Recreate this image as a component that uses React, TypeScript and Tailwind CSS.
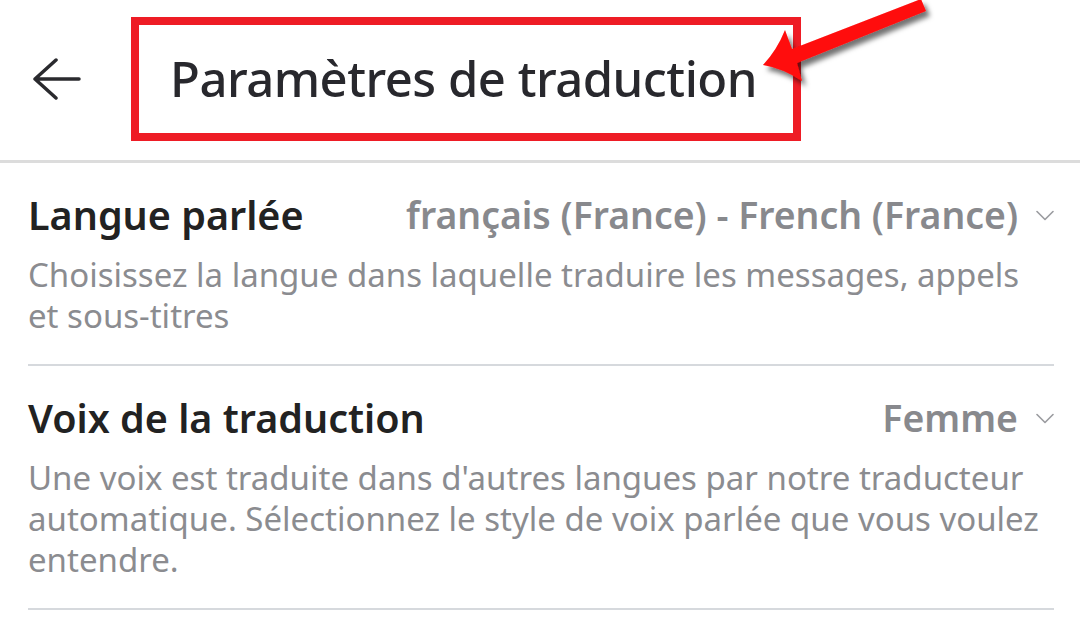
import React from "react"

const font = { fontFamily: '"Noto Sans", "Open Sans", sans-serif' }

function Chevron() {
  return (
    <svg width="18" height="11" viewBox="0 0 18 11" className="shrink-0 ml-[18px]">
      <path d="M1 1.5 9 9.5 17 1.5" fill="none" stroke="#9a9b9f" strokeWidth="1.6" strokeLinecap="round" strokeLinejoin="round" />
    </svg>
  )
}

function SettingRow({ label, value, lines }: { label: string; value: string; lines: string[] }) {
  return (
    <div className="border-b-2 border-[#d6d9dd] pt-[28px] pb-[28px]">
      <div className="flex items-center h-[48px]">
        <span className="text-[39.5px] leading-[48px] font-semibold text-[#222222] whitespace-nowrap">{label}</span>
        <div className="ml-auto flex items-center">
          <span className="text-[37.4px] leading-[48px] font-semibold text-[#88898d] whitespace-nowrap">{value}</span>
          <Chevron />
        </div>
      </div>
      <p className="mt-[15px] text-[33px] leading-[41px] text-[#8b8c90]">
        {lines.map((l) => (
          <span key={l} className="block whitespace-nowrap">{l}</span>
        ))}
      </p>
    </div>
  )
}

export default function App() {
  return (
    <div className="relative w-[1080px] h-[636px] bg-white overflow-hidden" style={font}>
      {/* Header */}
      <div className="flex items-center h-[163px] border-b-[3px] border-[#dcdcdc] pl-[33px]">
        <svg width="48" height="42" viewBox="0 0 48 42" className="shrink-0 -mt-[2px]">
          <path d="M46 21H2M23 2 2 21l21 19" fill="none" stroke="#2a2a2e" strokeWidth="3.5" strokeLinecap="round" strokeLinejoin="round" />
        </svg>
        <div className="ml-[50px] -mt-[3px] w-[670px] h-[124px] border-[8px] border-[#ee1c25] flex items-center pl-[31px]">
          <h1 className="text-[49px] leading-none font-medium tracking-[-0.5px] text-[#28282d] whitespace-nowrap">Paramètres de traduction</h1>
        </div>
      </div>

      <div className="pl-[28px] pr-[26px]">
        <SettingRow
          label="Langue parlée"
          value="français (France) - French (France)"
          lines={["Choisissez la langue dans laquelle traduire les messages, appels", "et sous-titres"]}
        />
        <SettingRow
          label="Voix de la traduction"
          value="Femme"
          lines={[
            "Une voix est traduite dans d'autres langues par notre traducteur",
            "automatique. Sélectionnez le style de voix parlée que vous voulez",
            "entendre.",
          ]}
        />
      </div>

      {/* annotation arrow */}
      <svg width="200" height="100" viewBox="0 0 200 100" className="absolute left-[750px] top-0">
        <defs>
          <filter id="sh" x="-20%" y="-20%" width="140%" height="140%">
            <feDropShadow dx="4" dy="5" stdDeviation="2.5" floodColor="#000" floodOpacity="0.55" />
          </filter>
        </defs>
        <path
          d="M13 65Q27 50 35 30L42 49L171 -1L176 11L47 63L52 81Q32 68 13 65Z"
          fill="#ff0a0a"
          filter="url(#sh)"
        />
      </svg>
    </div>
  )
}
